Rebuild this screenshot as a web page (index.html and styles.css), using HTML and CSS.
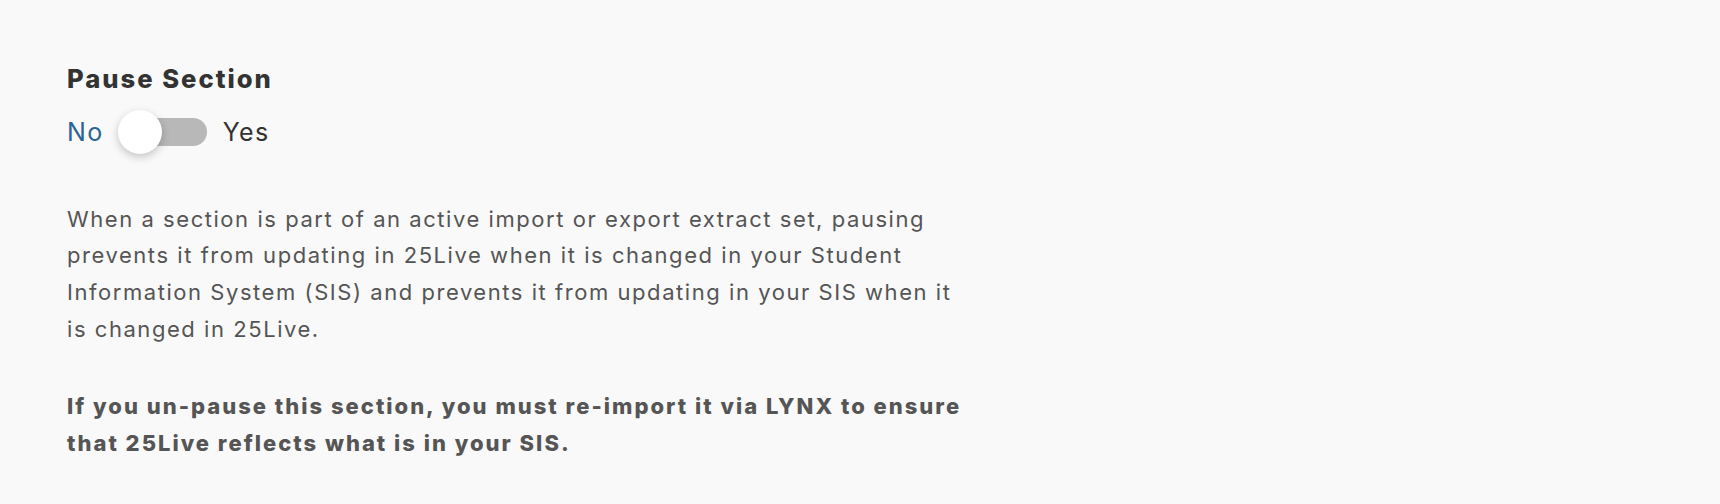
FILE: index.html
```html
<!DOCTYPE html>
<html lang="en">
<head>
<meta charset="utf-8">
<title>Pause Section</title>
<link rel="stylesheet" href="styles.css">
</head>
<body>
<main class="panel">
  <h2 class="title">Pause Section</h2>
  <div class="toggle-row">
    <span class="opt opt-no">No</span>
    <span class="switch" role="switch" aria-checked="false">
      <span class="track"></span>
      <span class="knob"></span>
    </span>
    <span class="opt opt-yes">Yes</span>
  </div>
  <p class="desc">When a section is part of an active import or export extract set, pausing<br>prevents it from updating in 25Live when it is changed in your Student<br>Information System (SIS) and prevents it from updating in your SIS when it<br>is changed in 25Live.</p>
  <p class="desc strong">If you un-pause this section, you must re-import it via LYNX to ensure<br>that 25Live reflects what is in your SIS.</p>
</main>
</body>
</html>
```

FILE: styles.css
```css
html, body {
  margin: 0;
  padding: 0;
  background: #f9f9f9;
}
body {
  font-family: Inter, "Noto Sans", sans-serif;
  color: #555555;
}
.panel {
  padding: 64px 0 0 67px;
}
.title {
  margin: 0;
  font-size: 25.6px;
  line-height: 1.2;
  font-weight: 800;
  letter-spacing: 2px;
  color: #333333;
}
.toggle-row {
  margin-top: 15px;
  display: flex;
  align-items: center;
  height: 44px;
}
.opt {
  font-size: 25px;
  line-height: 44px;
  letter-spacing: 1.4px;
}
.opt-no {
  color: #2a6496;
  margin-right: 14px;
}
.opt-yes {
  color: #333333;
  margin-left: 16px;
}
.switch {
  position: relative;
  display: inline-block;
  width: 89px;
  height: 44px;
}
.track {
  position: absolute;
  left: 8px;
  right: 0;
  top: 8px;
  height: 28px;
  border-radius: 14px;
  background: #b8b8b8;
}
.knob {
  position: absolute;
  left: 0;
  top: 0;
  width: 44px;
  height: 44px;
  border-radius: 50%;
  background: #ffffff;
  box-shadow: 0 3px 8px rgba(0, 0, 0, 0.22);
}
.desc {
  margin: 47px 0 0 0;
  font-size: 22px;
  line-height: 36.67px;
  font-weight: 400;
  letter-spacing: 1.55px;
}
.desc.strong {
  margin-top: 41px;
  font-weight: 800;
  letter-spacing: 2px;
}
```
